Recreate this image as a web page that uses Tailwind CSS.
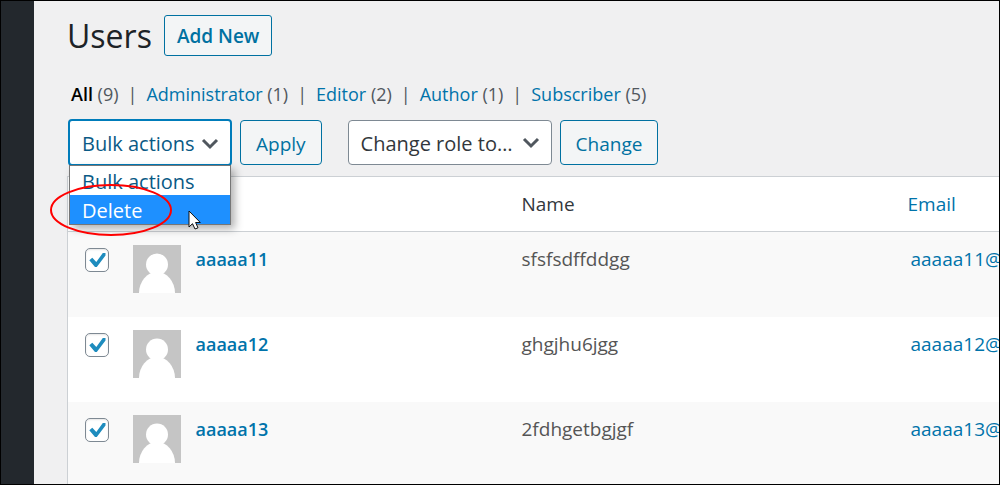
<!DOCTYPE html>
<html lang="en">
<head>
  <meta charset="UTF-8" />
  <meta name="viewport" content="width=device-width, initial-scale=1.0" />
  <title>Users</title>
  <script src="https://cdn.jsdelivr.net/npm/@tailwindcss/browser@4"></script>
</head>
<body class="flex min-h-screen border border-black bg-[#f0f0f1] font-['Open_Sans','Noto_Sans',sans-serif] text-[19px] leading-7 text-[#3c434a] overflow-hidden">
  <!-- shared shapes -->
  <svg class="hidden">
    <symbol id="chevron" viewBox="0 0 18 12"><path d="M2 2l7 7 7-7" fill="none" stroke="#50575e" stroke-width="3" /></symbol>
    <symbol id="tick" viewBox="0 0 18 16"><path d="M.3 8.200L3.300 5.800l4 4.200L13.800 1h2.700v2.500L7.800 15H6z" fill="#1e8cbe" /></symbol>
    <symbol id="avatar" viewBox="0 0 48 48">
      <rect width="48" height="48" fill="#c5c5c5" />
      <circle cx="24" cy="19.500" r="11" fill="#fff" />
      <ellipse cx="24" cy="48" rx="18" ry="21" fill="#fff" />
    </symbol>
  </svg>

  <aside class="w-[33px] shrink-0 bg-[#23282d]"></aside>

  <main class="h-[calc(100vh-2px)] min-w-0 flex-1 overflow-hidden pl-[33px] pt-[14px]">
    <header class="flex items-center gap-3">
      <h1 class="text-[32px] leading-[41px] text-[#1d2327]">Users</h1>
      <button class="h-[41px] rounded-[3px] border border-[#0071a1] bg-[#f3f5f6] px-3 font-semibold text-[#0071a1]">Add New</button>
    </header>

    <nav class="mt-6 flex gap-[9px] pl-1 text-[18px] text-[#50575e]">
      <span><a href="#" class="font-semibold text-black">All</a> (9)</span>
      <span>|</span>
      <span><a href="#" class="text-[#0073aa]">Administrator</a> (1)</span>
      <span>|</span>
      <span><a href="#" class="text-[#0073aa]">Editor</a> (2)</span>
      <span>|</span>
      <span><a href="#" class="text-[#0073aa]">Author</a> (1)</span>
      <span>|</span>
      <span><a href="#" class="text-[#0073aa]">Subscriber</a> (5)</span>
    </nav>

    <div class="mt-[11px] flex items-center gap-2 pl-px">
      <div class="relative">
        <select aria-label="Bulk actions" class="h-[47px] w-[164px] appearance-none rounded-[4px] border-2 border-[#007cba] bg-white pl-3 pt-0.5 text-[20px] text-[#0a5a85]">
          <option>Bulk actions</option>
          <option>Delete</option>
        </select>
        <svg class="pointer-events-none absolute right-[13px] top-[19px] h-3 w-[18px]"><use href="#chevron" /></svg>

        <ul class="absolute left-px top-[46px] z-10 w-[162px] border border-[#767676] bg-white text-[20px] leading-[27px] text-[#0a5a85] shadow-[4px_4px_8px_rgba(0,0,0,0.3)]">
          <li class="pl-3 pt-0.5">Bulk actions</li>
          <li class="bg-[#1e90ff] pl-3 pt-0.5 text-white">Delete</li>
        </ul>
        <!-- pen mark around the option, and the pointer -->
        <svg class="pointer-events-none absolute left-[-18px] top-[64px] z-20 h-[54px] w-[122px]" viewBox="0 0 122 54">
          <ellipse cx="61" cy="27" rx="60" ry="25" fill="none" stroke="#f00" stroke-width="2" />
        </svg>
        <svg class="pointer-events-none absolute left-[120px] top-[91px] z-20 h-5 w-[13px]" viewBox="0 0 13 20">
          <path d="M1 1v16l3.500-3.300L7 19l3-1.200-2.400-5.300h4.700z" fill="#fff" stroke="#111" />
        </svg>
      </div>
      <button class="h-[45px] rounded-[4px] border border-[#0071a1] bg-[#f3f5f6] px-[15px] pt-0.5 text-[#0071a1]">Apply</button>

      <div class="relative ml-[18px]">
        <select aria-label="Change role to" class="h-[45px] w-[204px] appearance-none rounded-[4px] border border-[#7e8993] bg-white pl-3 pt-0.5 text-[20px] text-[#32373c]">
          <option>Change role to…</option>
        </select>
        <svg class="pointer-events-none absolute right-[12px] top-[17px] h-3 w-[18px]"><use href="#chevron" /></svg>
      </div>
      <button class="h-[45px] rounded-[4px] border border-[#0071a1] bg-[#f3f5f6] px-[15px] pt-0.5 text-[#0071a1]">Change</button>
    </div>

    <table class="mt-[10px] w-full table-fixed border-l border-t border-[#ccd0d4] bg-white text-left text-[#555]">
      <colgroup>
        <col class="w-[65px]" />
        <col class="w-[389px]" />
        <col class="w-[386px]" />
        <col />
      </colgroup>
      <thead>
        <tr class="h-[55px] border-b border-[#ccd0d4] text-[#32373c]">
          <td></td>
          <td></td>
          <th class="font-normal">Name</th>
          <th class="font-normal"><a href="#" class="text-[#0073aa]">Email</a></th>
        </tr>
      </thead>
      <tbody>
        <tr class="h-[85px] bg-[#f9f9f9] align-top">
          <td class="pl-[17px] pt-4">
            <label class="relative block size-6">
              <input type="checkbox" checked aria-label="Select aaaaa11" class="block size-6 appearance-none rounded-[5px] border border-[#7e8993] bg-white shadow-[inset_0_1px_2px_rgba(0,0,0,0.1)]" />
              <svg class="absolute left-1 top-1 h-4 w-[18px]"><use href="#tick" /></svg>
            </label>
          </td>
          <td class="pt-[13px]">
            <div class="flex gap-[15px]">
              <svg class="size-12"><use href="#avatar" /></svg>
              <a href="#" class="text-[18px] font-semibold text-[#0073aa]">aaaaa11</a>
            </div>
          </td>
          <td class="pt-[13px]">sfsfsdffddgg</td>
          <td class="overflow-hidden whitespace-nowrap pl-[3px] pt-[13px]"><a href="#" class="text-[#0073aa]">aaaaa11@</a></td>
        </tr>
        <tr class="h-[85px] align-top">
          <td class="pl-[17px] pt-4">
            <label class="relative block size-6">
              <input type="checkbox" checked aria-label="Select aaaaa12" class="block size-6 appearance-none rounded-[5px] border border-[#7e8993] bg-white shadow-[inset_0_1px_2px_rgba(0,0,0,0.1)]" />
              <svg class="absolute left-1 top-1 h-4 w-[18px]"><use href="#tick" /></svg>
            </label>
          </td>
          <td class="pt-[13px]">
            <div class="flex gap-[15px]">
              <svg class="size-12"><use href="#avatar" /></svg>
              <a href="#" class="text-[18px] font-semibold text-[#0073aa]">aaaaa12</a>
            </div>
          </td>
          <td class="pt-[13px]">ghgjhu6jgg</td>
          <td class="overflow-hidden whitespace-nowrap pl-[3px] pt-[13px]"><a href="#" class="text-[#0073aa]">aaaaa12@</a></td>
        </tr>
        <tr class="h-[85px] bg-[#f9f9f9] align-top">
          <td class="pl-[17px] pt-4">
            <label class="relative block size-6">
              <input type="checkbox" checked aria-label="Select aaaaa13" class="block size-6 appearance-none rounded-[5px] border border-[#7e8993] bg-white shadow-[inset_0_1px_2px_rgba(0,0,0,0.1)]" />
              <svg class="absolute left-1 top-1 h-4 w-[18px]"><use href="#tick" /></svg>
            </label>
          </td>
          <td class="pt-[13px]">
            <div class="flex gap-[15px]">
              <svg class="size-12"><use href="#avatar" /></svg>
              <a href="#" class="text-[18px] font-semibold text-[#0073aa]">aaaaa13</a>
            </div>
          </td>
          <td class="pt-[13px]">2fdhgetbgjgf</td>
          <td class="overflow-hidden whitespace-nowrap pl-[3px] pt-[13px]"><a href="#" class="text-[#0073aa]">aaaaa13@</a></td>
        </tr>
      </tbody>
    </table>
  </main>
</body>
</html>
